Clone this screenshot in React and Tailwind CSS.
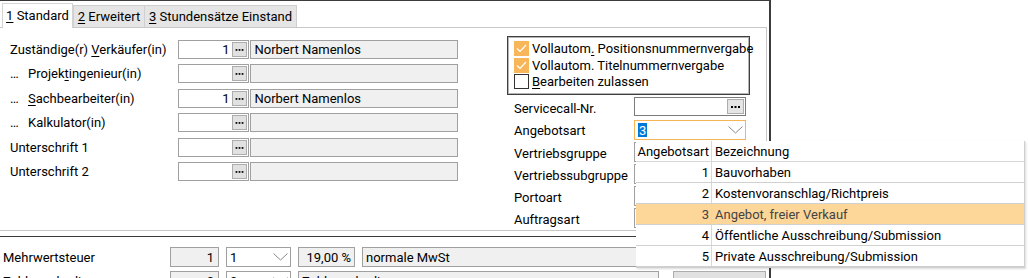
import React from 'react';

const Dots = () => (
  <svg width="15" height="15" viewBox="0 0 15 15" className="block">
    <rect x="3" y="7" width="2" height="2" fill="#000" />
    <rect x="6.5" y="7" width="2" height="2" fill="#000" />
    <rect x="10" y="7" width="2" height="2" fill="#000" />
  </svg>
);

const DotsButton = () => (
  <div className="w-[15px] h-[15px] bg-[#e1e1e1] border border-[#adadad] flex items-center justify-center box-border">
    <Dots />
  </div>
);

const Chevron = () => (
  <svg width="15" height="8" viewBox="0 0 15 8" className="block">
    <polyline points="0.5,0.5 7.5,7 14.5,0.5" fill="none" stroke="#8a8a8a" strokeWidth="1" />
  </svg>
);

const Check = ({ checked }) =>
  checked ? (
    <div className="w-[15px] h-[15px] shrink-0 bg-[#f8b65b] flex items-center justify-center">
      <svg width="15" height="15" viewBox="0 0 15 15" className="block">
        <polyline points="3,7.5 6,10.5 12,4" fill="none" stroke="#fff" strokeWidth="1.2" />
      </svg>
    </div>
  ) : (
    <div className="w-[15px] h-[15px] shrink-0 bg-white border border-[#333] box-border" />
  );

const U = ({ children }) => <span className="underline underline-offset-2">{children}</span>;

const leftRows = [
  { label: <>Zuständige(r) <U>V</U>erkäufer(in)</>, nr: '1', name: 'Norbert Namenlos' },
  { label: <><span className="inline-block w-[18px]">…</span>Projek<U>t</U>ingenieur(in)</>, nr: '', name: '' },
  { label: <><span className="inline-block w-[18px]">…</span><U>S</U>achbearbeiter(in)</>, nr: '1', name: 'Norbert Namenlos' },
  { label: <><span className="inline-block w-[18px]">…</span>Kalkulator(in)</>, nr: '', name: '' },
  { label: 'Unterschrift 1', nr: '', name: '' },
  { label: 'Unterschrift 2', nr: '', name: '' },
];

const options = [
  ['1', 'Bauvorhaben'],
  ['2', 'Kostenvoranschlag/Richtpreis'],
  ['3', 'Angebot, freier Verkauf'],
  ['4', 'Öffentliche Ausschreibung/Submission'],
  ['5', 'Private Ausschreibung/Submission'],
];

export default function App() {
  return (
    <div className="w-[1028px] h-[278px] overflow-hidden bg-white relative font-['Roboto',sans-serif] text-[13px] text-black leading-none">
      <div className="w-[771px] h-full border-t border-r-2 border-[#3c3c3c]">
        {/* tabs */}
        <div className="flex items-end pl-[2px] h-[26px]">
          <div className="w-[71px] h-[25px] bg-white border-t border-l border-r border-[#d4d4d4] flex items-center justify-center relative z-10 -mb-px pb-[1px]">
            <span><U>1</U> Standard</span>
          </div>
          <div className="w-[72px] h-[22px] bg-[#e5e5e5] border border-b-0 border-[#cfcfcf] flex items-center justify-center">
            <span><U>2</U> Erweitert</span>
          </div>
          <div className="w-[152px] h-[22px] bg-[#e5e5e5] border border-b-0 border-l-0 border-[#cfcfcf] flex items-center justify-center">
            <span><U>3</U> Stundensätze Einstand</span>
          </div>
        </div>

        {/* panel */}
        <div className="h-[204px] mr-[2px] border-t border-r border-b border-[#c8c8c8] flex">
          <div className="w-[458px] pl-[10px] pt-[12px] flex flex-col gap-[5.4px]">
            {leftRows.map((r, i) => (
              <div key={i} className="flex items-center h-[19px]">
                <div className="w-[168px] whitespace-nowrap">{r.label}</div>
                <div className="w-[72px] h-[19px] border border-[#a0a0a0] bg-white flex items-center justify-end pr-[1px] box-border">
                  <span className="pr-[3px]">{r.nr}</span>
                  <DotsButton />
                </div>
                <div className="w-[208px] h-[19px] ml-[1px] border border-[#a0a0a0] bg-[#f0f0f0] flex items-center pl-[3px] box-border whitespace-nowrap">
                  {r.name}
                </div>
              </div>
            ))}
          </div>

          <div className="ml-[49px] pt-[8px] flex flex-col">
            <div className="w-[243px] h-[59px] border border-[#3f3f3f] shadow-[inset_0_0_0_1px_#b4b4b4] pl-[6px] pt-[4px] flex flex-col gap-[1.5px] box-border whitespace-nowrap">
              <div className="flex items-center gap-[3px] h-[15px]">
                <Check checked />
                <span>Vollautom<U>.</U> Positionsnummernvergabe</span>
              </div>
              <div className="flex items-center gap-[3px] h-[15px]">
                <Check checked />
                <span>Vollautom. Titelnummernvergabe</span>
              </div>
              <div className="flex items-center gap-[3px] h-[15px]">
                <Check />
                <span><U>B</U>earbeiten zulassen</span>
              </div>
            </div>

            <div className="flex items-center h-[19px] mt-[2px]">
              <div className="w-[127px] pl-[7px] pt-[3px]">Servicecall-Nr.</div>
              <div className="w-[112px] h-[19px] border border-[#7a7a7a] bg-white flex items-center justify-end pr-[1px] box-border">
                <div className="w-[17px] h-[15px] bg-[#e5e5e5] border border-[#adadad] flex items-center justify-center box-border">
                  <Dots />
                </div>
              </div>
            </div>

            <div className="flex items-center h-[20px] mt-[4px]">
              <div className="w-[127px] pl-[7px]">Angebotsart</div>
              <div className="w-[112px] h-[20px] border border-[#f5b456] bg-white flex items-center justify-between pl-[3px] pr-[2px] box-border">
                <span className="bg-[#0078d7] text-white px-[1px] h-[14px] flex items-center">3</span>
                <Chevron />
              </div>
            </div>

            {['Vertriebsgruppe', 'Vertriebssubgruppe', 'Portoart', 'Auftragsart'].map((l) => (
              <div key={l} className="flex items-center h-[20px] mt-[2px]">
                <div className="w-[127px] pl-[7px] pt-[2px]">{l}</div>
                <div className="w-[112px] h-[20px] border border-[#a0a0a0] bg-white box-border" />
              </div>
            ))}
          </div>
        </div>

        {/* bottom */}
        <div className="mt-[5px] border-t border-[#3c3c3c] pt-[10px] flex flex-col gap-[4px]">
          <div className="flex items-center h-[20px]">
            <div className="w-[170px] pl-[3px]">Mehrwertsteuer</div>
            <div className="w-[49px] h-[20px] border border-[#a0a0a0] bg-[#f0f0f0] flex items-center justify-end pr-[4px] box-border">1</div>
            <div className="w-[65px] h-[20px] ml-[7px] border border-[#a0a0a0] bg-white flex items-center justify-between pl-[3px] pr-[2px] box-border">
              <span>1</span>
              <Chevron />
            </div>
            <div className="w-[57px] h-[20px] ml-[7px] border border-[#a0a0a0] bg-[#f0f0f0] flex items-center justify-end pr-[3px] box-border">19,00 %</div>
            <div className="w-[297px] h-[20px] ml-[7px] border border-[#a0a0a0] bg-[#f0f0f0] flex items-center pl-[3px] box-border">normale MwSt</div>
          </div>
          <div className="flex items-center h-[20px]">
            <div className="w-[170px] pl-[3px]">Zahlungsbedingung</div>
            <div className="w-[49px] h-[20px] border border-[#a0a0a0] bg-[#f0f0f0] flex items-center justify-end pr-[4px] box-border">0</div>
            <div className="w-[65px] h-[20px] ml-[7px] border border-[#a0a0a0] bg-white flex items-center justify-between pl-[3px] pr-[2px] box-border">
              <span>0</span>
              <Chevron />
            </div>
            <div className="w-[361px] h-[20px] ml-[7px] border border-[#a0a0a0] bg-[#f0f0f0] flex items-center pl-[3px] box-border">Zahlungsbedingung</div>
            <div className="w-[93px] h-[20px] ml-[14px] border border-[#adadad] bg-[#e1e1e1] box-border" />
          </div>
        </div>
      </div>

      {/* dropdown list */}
      <div className="absolute left-[636px] top-[141px] w-[389px] bg-white border-r border-b border-[#cfcfcf] shadow-[1px_1px_2px_rgba(0,0,0,0.15)]">
        <div className="flex h-[21px] border-b border-[#d8d8d8]">
          <div className="w-[76px] flex items-center justify-end pr-[2px] border-r border-[#d8d8d8]">Angebotsart</div>
          <div className="flex-1 flex items-center pl-[3px]">Bezeichnung</div>
        </div>
        {options.map(([n, t]) => (
          <div key={n} className={`flex h-[21px] border-b border-[#d0d0d0] ${n === '3' ? 'bg-[#fdd699] text-[#444]' : ''}`}>
            <div className="w-[76px] flex items-center justify-end pr-[2px] border-r border-[#d8d8d8]">{n}</div>
            <div className="flex-1 flex items-center pl-[3px] whitespace-nowrap">{t}</div>
          </div>
        ))}
      </div>
    </div>
  );
}
